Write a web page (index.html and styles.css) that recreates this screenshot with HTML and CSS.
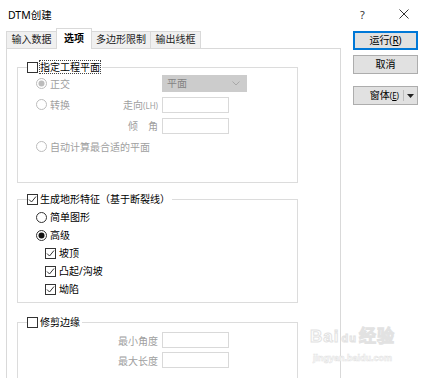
FILE: index.html
```html
<!DOCTYPE html>
<html lang="zh-CN">
<head>
    <meta charset="UTF-8">
    <title>DTM创建</title>
    <link rel="stylesheet" href="styles.css">
</head>
<body>
<div class="dialog">
    <div class="titlebar">
        <span class="title">DTM创建</span>
        <span class="help">?</span>
        <span class="close">
            <svg width="10" height="10" viewBox="0 0 10 10"><path d="M0.5 0.5 L9.5 9.5 M9.5 0.5 L0.5 9.5" stroke="#333" stroke-width="1" fill="none"/></svg>
        </span>
    </div>

    <div class="content">
        <div class="tabarea">
            <div class="tabs">
                <div class="tab w1">输入数据</div>
                <div class="tab w2 active">选项</div>
                <div class="tab w3">多边形限制</div>
                <div class="tab w4">输出线框</div>
            </div>
            <div class="panel">

                <fieldset class="group g1">
                    <legend>
                        <svg class="box" width="11" height="11" viewBox="0 0 11 11"><rect x="0.5" y="0.5" width="10" height="10" fill="#fff" stroke="#333"/></svg>
                        <span class="focus">指定工程平面</span>
                    </legend>
                    <div class="grid">
                        <div class="opt dis">
                            <svg width="11" height="11" viewBox="0 0 11 11"><circle cx="5.5" cy="5.5" r="5" fill="#fff" stroke="#bcbcbc"/><circle cx="5.5" cy="5.5" r="3" fill="#bcbcbc"/></svg>
                            正交
                        </div>
                        <div></div>
                        <div class="select">平面
                            <svg width="8" height="5" viewBox="0 0 8 5"><path d="M0.5 0.5 L4 4 L7.5 0.5" stroke="#a8a8a8" fill="none"/></svg>
                        </div>

                        <div class="opt dis">
                            <svg width="11" height="11" viewBox="0 0 11 11"><circle cx="5.5" cy="5.5" r="5" fill="#fff" stroke="#bcbcbc"/></svg>
                            转换
                        </div>
                        <div class="lbl dis">走向<small>(LH)</small></div>
                        <div class="input"></div>

                        <div></div>
                        <div class="lbl dis">倾　角</div>
                        <div class="input"></div>

                        <div class="opt dis wide">
                            <svg width="11" height="11" viewBox="0 0 11 11"><circle cx="5.5" cy="5.5" r="5" fill="#fff" stroke="#bcbcbc"/></svg>
                            自动计算最合适的平面
                        </div>
                    </div>
                </fieldset>

                <fieldset class="group g2">
                    <legend>
                        <svg class="box" width="11" height="11" viewBox="0 0 11 11"><rect x="0.5" y="0.5" width="10" height="10" fill="#fff" stroke="#333"/><path d="M2 5.5 L4.5 8 L9 2.5" stroke="#333" fill="none"/></svg>
                        <span>生成地形特征（基于断裂线）</span>
                    </legend>
                    <div class="list">
                        <div class="opt">
                            <svg width="11" height="11" viewBox="0 0 11 11"><circle cx="5.5" cy="5.5" r="5" fill="#fff" stroke="#333"/></svg>
                            简单图形
                        </div>
                        <div class="opt">
                            <svg width="11" height="11" viewBox="0 0 11 11"><circle cx="5.5" cy="5.5" r="5" fill="#fff" stroke="#333"/><circle cx="5.5" cy="5.5" r="3" fill="#111"/></svg>
                            高级
                        </div>
                        <div class="opt sub">
                            <svg width="11" height="11" viewBox="0 0 11 11"><rect x="0.5" y="0.5" width="10" height="10" fill="#fff" stroke="#333"/><path d="M2 5.5 L4.5 8 L9 2.5" stroke="#333" fill="none"/></svg>
                            坡顶
                        </div>
                        <div class="opt sub">
                            <svg width="11" height="11" viewBox="0 0 11 11"><rect x="0.5" y="0.5" width="10" height="10" fill="#fff" stroke="#333"/><path d="M2 5.5 L4.5 8 L9 2.5" stroke="#333" fill="none"/></svg>
                            凸起/沟坡
                        </div>
                        <div class="opt sub">
                            <svg width="11" height="11" viewBox="0 0 11 11"><rect x="0.5" y="0.5" width="10" height="10" fill="#fff" stroke="#333"/><path d="M2 5.5 L4.5 8 L9 2.5" stroke="#333" fill="none"/></svg>
                            坳陷
                        </div>
                    </div>
                </fieldset>

                <fieldset class="group g3">
                    <legend>
                        <svg class="box" width="11" height="11" viewBox="0 0 11 11"><rect x="0.5" y="0.5" width="10" height="10" fill="#fff" stroke="#333"/></svg>
                        <span>修剪边缘</span>
                    </legend>
                    <div class="grid rows20">
                        <div class="lbl dis span2">最小角度</div>
                        <div class="input"></div>
                        <div class="lbl dis span2">最大长度</div>
                        <div class="input"></div>
                    </div>
                </fieldset>

            </div>
        </div>

        <div class="side">
            <div class="btn default">运行(<u>R</u>)</div>
            <div class="btn">取消</div>
            <div class="btn split">
                <span class="split-text">窗体<small>(<u>E</u>)</small></span>
                <span class="split-arrow">
                    <svg width="7" height="4" viewBox="0 0 7 4"><path d="M0 0 L7 0 L3.5 4 Z" fill="#222"/></svg>
                </span>
            </div>
        </div>
    </div>

    <div class="watermark">
        <div class="wm-logo">Bai<span class="paw">du</span>经验</div>
        <div class="wm-url">jingyan.baidu.com</div>
    </div>
</div>
</body>
</html>
```

FILE: styles.css
```css
body { margin: 0; background: #fff; font-family: "Noto Sans", "Noto Sans CJK SC", sans-serif; font-size: 10px; color: #000; }
.dialog { position: relative; width: 425px; height: 378px; overflow: hidden; background: #fff; }

.titlebar { height: 28px; display: flex; align-items: center; padding-left: 8px; }
.title { font-size: 10.5px; flex: 1; }
.help { width: 12px; margin-right: 27px; font-size: 11px; color: #333; }
.close { width: 10px; margin-right: 16px; display: flex; }

.content { display: flex; }
.tabarea { margin-left: 6px; width: 335px; }
.tabs { display: flex; align-items: flex-end; height: 20px; }
.tab { box-sizing: border-box; height: 17px; border: 1px solid #d9d9d9; border-bottom: 0; background: #f0f0f0; margin-right: -1px; text-align: center; line-height: 15px; color: #222; }
.tab.active { height: 21px; margin-bottom: -1px; background: #fff; font-weight: bold; color: #000; position: relative; z-index: 1; line-height: 19px; }
.w1 { width: 51px; }
.w2 { width: 36px; }
.w3 { width: 60px; }
.w4 { width: 51px; }

.panel { box-sizing: border-box; height: 340px; border: 1px solid #d9d9d9; }

.group { box-sizing: border-box; width: 281px; margin: 0 0 0 10px; padding: 0; border: 1px solid #dcdcdc; min-width: 0; }
.group legend { margin-left: 9px; padding: 0 2px 0 0; height: 12px; display: flex; align-items: center; gap: 2px; line-height: 12px; }
.box { display: block; }
.focus { outline: 1px dotted #444; outline-offset: 0; }
.g1 { margin-top: 12px; padding-bottom: 25px; }
.g2 { margin-top: 10px; padding: 3px 0 4px; }
.g3 { margin-top: 13px; padding-top: 2px; height: 70px; }

.grid { display: grid; grid-template-columns: 68px 50px auto; column-gap: 4px; grid-auto-rows: 21px; align-items: center; padding-left: 18px; }
.grid.rows20 { grid-auto-rows: 20px; }
.wide { grid-column: 1 / 4; }
.span2 { grid-column: 1 / 3; }

.opt { display: flex; align-items: center; gap: 3px; height: 17px; line-height: 12px; white-space: nowrap; }
.opt svg { flex: none; }
.list { padding-left: 18px; }
.list .opt { height: 18px; }
.sub { margin-left: 9px; }
.dis { color: #a0a0a0; }
.lbl { text-align: right; white-space: nowrap; }
.lbl small { font-size: 8px; }

.select { box-sizing: border-box; width: 85px; height: 17px; background: #cccccc; border: 1px solid #cccccc; color: #838383; padding-left: 4px; line-height: 15px; display: flex; align-items: center; justify-content: space-between; padding-right: 6px; }
.input { box-sizing: border-box; width: 67px; height: 16px; border: 1px solid #d9d9d9; background: #fff; }

.side { margin-left: 12px; width: 65px; padding-top: 3px; display: flex; flex-direction: column; }
.btn { box-sizing: border-box; height: 19px; border: 1px solid #adadad; background: #e1e1e1; text-align: center; line-height: 17px; }
.btn.default { border-color: #0078d7; box-shadow: inset 0 0 0 1px #0078d7; }
.btn + .btn { margin-top: 5px; }
.btn.split { margin-top: 12px; display: flex; align-items: center; }
.split-text { flex: 1; text-align: right; padding-right: 4px; }
.split-text small { font-size: 8px; }
.split-arrow { width: 13px; height: 11px; border-left: 1px solid #bdbdbd; display: flex; align-items: center; justify-content: center; }

.watermark { position: absolute; left: 305px; top: 322px; width: 95px; text-align: center; color: #fff; pointer-events: none; }
.wm-logo { font-family: "Liberation Sans", sans-serif; font-size: 17px; font-weight: bold; -webkit-text-stroke: 1px #e2e2e2; letter-spacing: 1px; line-height: 30px; }
.paw { font-size: 11px; margin: 0 2px; }
.wm-url { font-family: "Liberation Sans", sans-serif; font-size: 9px; font-weight: bold; -webkit-text-stroke: 0.6px #e4e4e4; line-height: 10px; }
```
